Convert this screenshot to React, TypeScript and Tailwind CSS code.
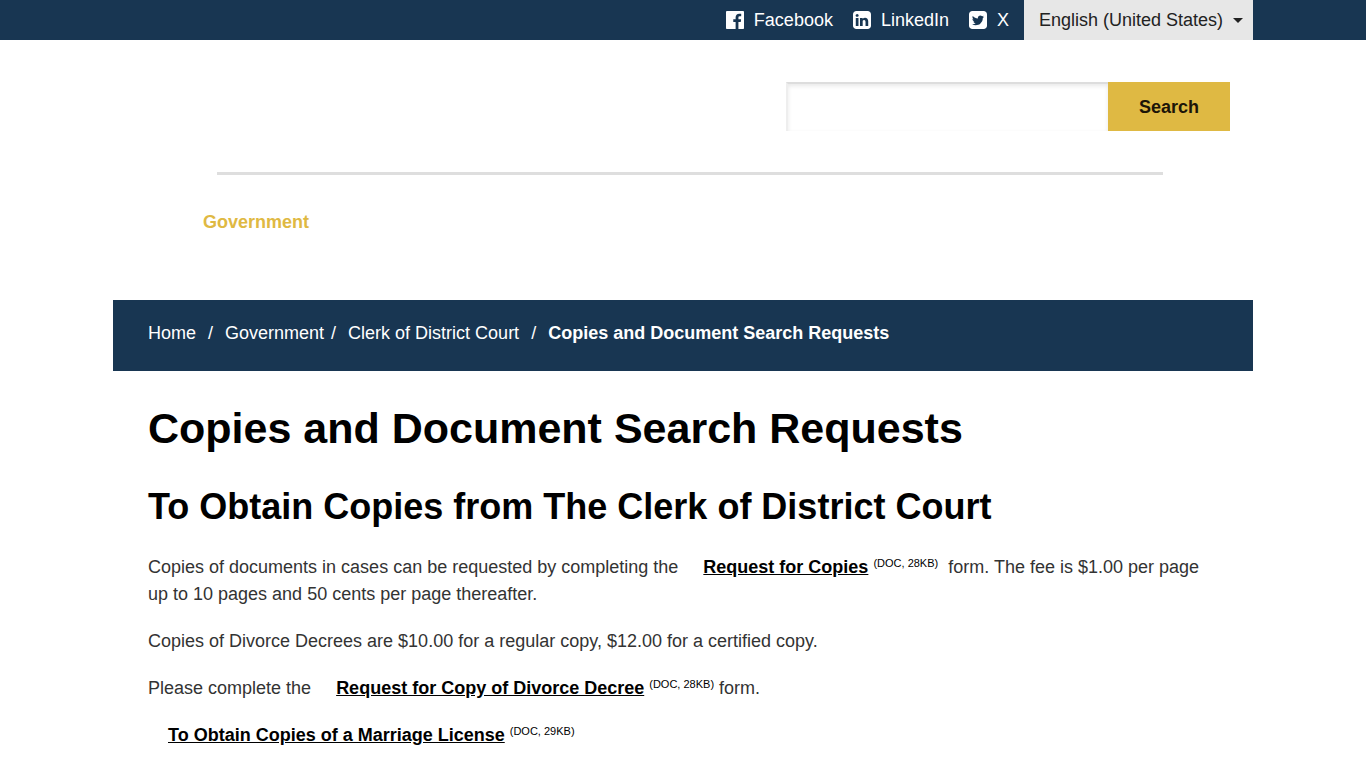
import type { ReactNode } from "react";

const socialLinks = [
	{
		name: "Facebook",
		path: "M1451 128q35 0 60 25t25 60v1366q0 35-25 60t-60 25h-391v-595h199l30-232h-229v-148q0-56 23.5-84t91.5-28l122-1v-207q-63-9-178-9-136 0-217.5 80t-81.5 226v171h-200v232h200v595h-735q-35 0-60-25t-25-60v-1366q0-35 25-60t60-25h1366z",
	},
	{
		name: "LinkedIn",
		path: "M237 1414h231v-694h-231v694zm246-908q-1-52-36-86t-93-34-94.5 34-36.5 86q0 51 35.5 85.5t92.5 34.5h1q59 0 95-34.5t36-85.5zm585 908h231v-398q0-154-73-233t-193-79q-136 0-209 117h2v-101h-231q3 66 0 694h231v-388q0-38 7-56 15-35 45-59.5t74-24.5q116 0 116 157v371zm468-998v960q0 119-84.5 203.5t-203.5 84.5h-960q-119 0-203.5-84.5t-84.5-203.5v-960q0-119 84.5-203.5t203.5-84.5h960q119 0 203.5 84.5t84.5 203.5z",
	},
	{
		name: "X",
		path: "M1280 610q-56 25-121 34 68-40 93-117-65 38-134 51-61-66-153-66-87 0-148.5 61.5t-61.5 148.5q0 29 5 48-129-7-242-65t-192-155q-29 50-29 106 0 114 91 175-47-1-100-26v2q0 75 50 133.5t123 72.5q-29 8-51 8-13 0-39-4 21 63 74.5 104t121.5 42q-116 90-261 90-26 0-50-3 148 94 322 94 112 0 210-35.5t168-95 120.5-137 75-162 24.5-168.5q0-18-1-27 63-45 105-109zm256-194v960q0 119-84.5 203.5t-203.5 84.5h-960q-119 0-203.5-84.5t-84.5-203.5v-960q0-119 84.5-203.5t203.5-84.5h960q119 0 203.5 84.5t84.5 203.5z",
	},
];

const Container = ({ children }: { children: ReactNode }) => {
	return <div className="mx-auto w-full max-w-[1140px]">{children}</div>;
};

const LanguageSelect = () => {
	return (
		<div className="relative">
			<select
				aria-label="Language"
				className="h-10 w-[229px] appearance-none bg-[#e7e7e7] pl-[15px] pr-6 text-[#222]"
			>
				<option>English (United States)</option>
			</select>
			<svg
				className="pointer-events-none absolute right-[10px] top-[18px] h-[5px] w-[10px]"
				viewBox="0 0 10 5"
				fill="#222"
				aria-hidden="true"
			>
				<path d="M0 0h10L5 5z" />
			</svg>
		</div>
	);
};

const TopBar = () => {
	return (
		<div className="bg-[#183652] text-white">
			<Container>
				<div className="flex items-center justify-end gap-[15px]">
					<ul className="flex items-center gap-5">
						{socialLinks.map((link) => (
							<li key={link.name}>
								<a href="#" className="flex items-center gap-[10px]">
									<svg
										className="size-[18px]"
										viewBox="0 128 1536 1536"
										fill="currentColor"
										aria-hidden="true"
									>
										<path d={link.path} />
									</svg>
									{link.name}
								</a>
							</li>
						))}
					</ul>
					<LanguageSelect />
				</div>
			</Container>
		</div>
	);
};

const Header = () => {
	return (
		<header>
			<Container>
				<form className="flex justify-end pr-[23px] pt-[42px]">
					<input
						type="text"
						aria-label="Search"
						className="h-[49px] w-[322px] border-l-2 border-t-2 border-l-[#eeeeee] border-t-[#dddddd] bg-white px-3 shadow-[inset_0_2px_4px_#e8e8e8]"
					/>
					<button
						type="button"
						className="h-[49px] w-[122px] bg-[#dfb943] pt-0.5 font-bold text-[#1c1508]"
					>
						Search
					</button>
				</form>
				<hr className="ml-[104px] mr-[90px] mt-[41px] border-t-[3px] border-[#dedede]" />
				<nav className="pb-[64px] pl-[90px] pt-[34px]">
					<a href="#" className="font-bold text-[#dfb943]">
						Government
					</a>
				</nav>
			</Container>
		</header>
	);
};

const Breadcrumb = () => {
	return (
		<Container>
			<nav
				aria-label="Breadcrumb"
				className="bg-[#183652] px-[35px] pb-6 pt-5 text-white"
			>
				<ol className="flex">
					<li>
						<a href="#">Home</a>
						<span className="mx-3">/</span>
					</li>
					<li>
						<a href="#">Government</a>
						<span className="ml-[7px] mr-3">/</span>
					</li>
					<li>
						<a href="#">Clerk of District Court</a>
						<span className="mx-3">/</span>
					</li>
					<li className="font-bold" aria-current="page">
						Copies and Document Search Requests
					</li>
				</ol>
			</nav>
		</Container>
	);
};

const DocLink = ({ name, size }: { name: string; size: string }) => {
	return (
		<>
			<a href="#" className="ml-5 font-bold text-black underline">
				{name}
			</a>{" "}
			<span className="align-[6px] text-[11px] leading-none text-black">
				(DOC, {size})
			</span>
		</>
	);
};

const Content = () => {
	return (
		<Container>
			<main className="px-[35px] pt-8">
				<h1 className="text-[43px] font-bold leading-[50px] text-black">
					Copies and Document Search Requests
				</h1>
				<h2 className="mt-[33px] text-4xl font-bold leading-[42px] text-black">
					To Obtain Copies from The Clerk of District Court
				</h2>
				<div className="mt-[26px] flex flex-col gap-5 text-[#333]">
					<p>
						Copies of documents in cases can be requested by completing the{" "}
						<DocLink name="Request for Copies" size="28KB" />
						&nbsp; form. The fee is $1.00 per page up to 10 pages and 50 cents
						per page thereafter.
					</p>
					<p>
						Copies of Divorce Decrees are $10.00 for a regular copy, $12.00 for
						a certified copy.
					</p>
					<p>
						Please complete the{" "}
						<DocLink name="Request for Copy of Divorce Decree" size="28KB" />{" "}
						form.
					</p>
					<p>
						<DocLink name="To Obtain Copies of a Marriage License" size="29KB" />
					</p>
				</div>
			</main>
		</Container>
	);
};

export default function App() {
	return (
		<div className="bg-white font-['Liberation_Sans',Arial,sans-serif] text-lg leading-[27px]">
			<TopBar />
			<Header />
			<Breadcrumb />
			<Content />
		</div>
	);
}
